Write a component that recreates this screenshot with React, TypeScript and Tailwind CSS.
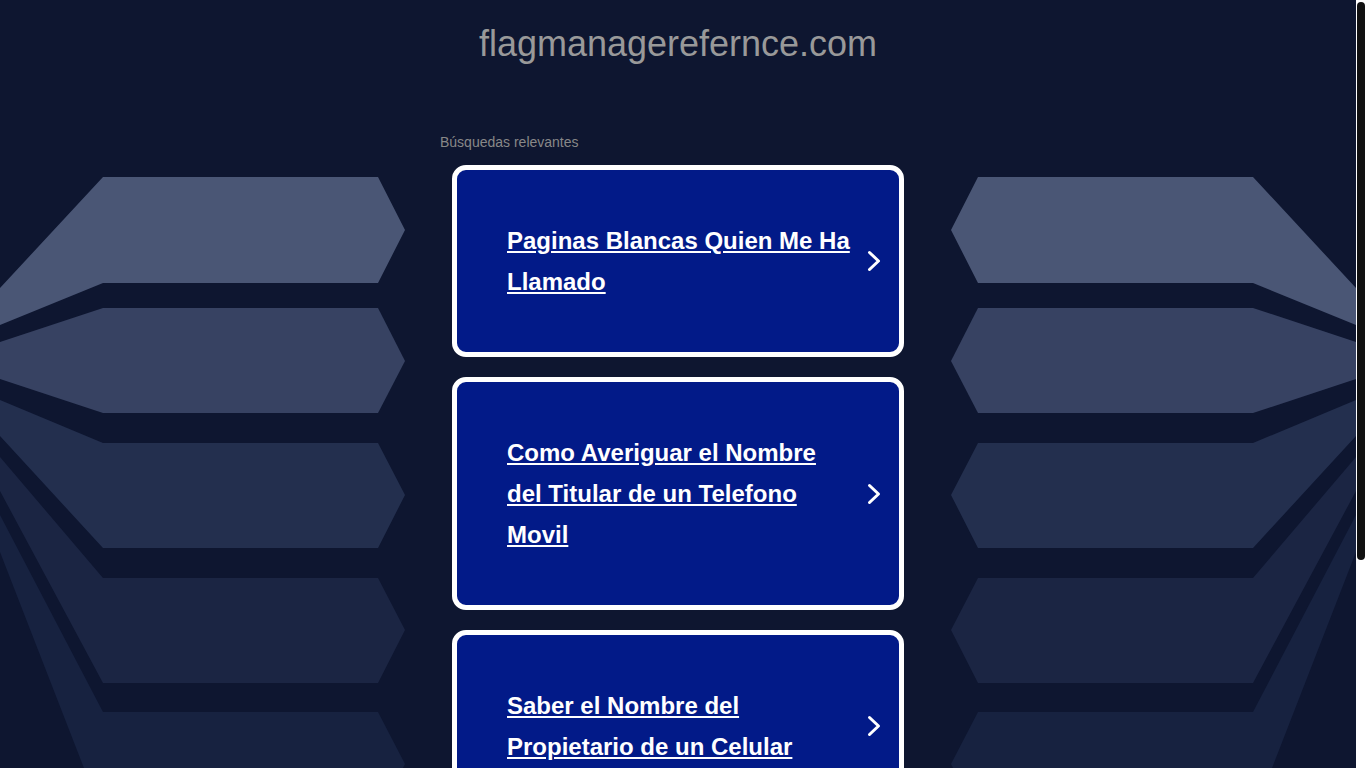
const searches = [
  'Paginas Blancas Quien Me Ha Llamado',
  'Como Averiguar el Nombre del Titular de un Telefono Movil',
  'Saber el Nombre del Propietario de un Celular',
];

// decorative fan of bands behind the page (left side, mirrored for the right)
function Bands() {
  return (
    <svg width="406" height="680" viewBox="0 160 406 680" className="block">
      <polygon fill="#4a5675" points="103,177 378,177 405,230 378,283 103,283 0,325 0,288" />
      <polygon fill="#374262" points="103,308 378,308 405,361 378,413 103,413 0,379 0,342" />
      <polygon fill="#232f4e" points="103,443 378,443 405,495 378,548 103,548 0,436 0,400" />
      <polygon fill="#1b2543" points="103,578 378,578 405,630 378,683 103,683 0,491 0,457" />
      <polygon fill="#172240" points="103,712 378,712 405,764 378,817 103,817 0,552 0,515" />
    </svg>
  );
}

function Chevron() {
  return (
    <svg width="14" height="22" viewBox="0 0 14 22" className="ml-[14px] shrink-0">
      <polyline
        points="2.5,2.5 11.5,11 2.5,19.5"
        fill="none"
        stroke="#fff"
        strokeWidth="3"
        strokeLinecap="round"
        strokeLinejoin="round"
      />
    </svg>
  );
}

function SearchCard({ label }: { label: string }) {
  return (
    <a
      href="#"
      className="flex items-center rounded-[14px] border-[5px] border-white bg-[#021a88] py-[50px] pl-[50px] text-white"
    >
      <span className="w-[346px] text-[24px] font-bold leading-[41px] underline">{label}</span>
      <Chevron />
    </a>
  );
}

export default function App() {
  return (
    <div className="flex h-screen overflow-hidden bg-white font-['Liberation_Sans',Arial,sans-serif]">
      <div className="relative min-w-0 flex-1 overflow-hidden bg-[#0e1630]">
        <div className="pointer-events-none absolute left-0 top-[160px]">
          <Bands />
        </div>
        <div className="pointer-events-none absolute right-0 top-[160px] -scale-x-100">
          <Bands />
        </div>

        <div className="relative">
          <h1 className="pt-[23px] text-center text-[36px] font-normal leading-[41px] text-[#999]">
            flagmanagerefernce.com
          </h1>

          <div className="mx-auto mt-[70px] w-[476px]">
            <p className="text-[14px] leading-[16px] text-[#888]">Búsquedas relevantes</p>
            <div className="mt-[15px] flex flex-col gap-[20px] px-[12px]">
              {searches.map((s) => (
                <SearchCard key={s} label={s} />
              ))}
            </div>
          </div>
        </div>
      </div>

      {/* scrollbar */}
      <div className="w-[10px] shrink-0 bg-white px-[1px] pt-[2px]">
        <div className="h-[558px] rounded-[4px] bg-[#111]" />
      </div>
    </div>
  );
}
